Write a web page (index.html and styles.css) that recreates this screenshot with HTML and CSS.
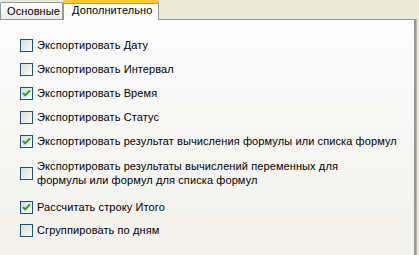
FILE: index.html
```html
<!DOCTYPE html>
<html>
<head>
<meta charset="utf-8">
<link rel="stylesheet" href="styles.css">
</head>
<body>
<div class="tabs">
  <div class="tab">Основные</div>
  <div class="tab active">Дополнительно</div>
</div>
<div class="panel">
  <div class="row"><span class="cb"></span><span class="lbl">Экспортировать Дату</span></div>
  <div class="row"><span class="cb"></span><span class="lbl">Экспортировать Интервал</span></div>
  <div class="row"><span class="cb checked"><svg viewBox="0 0 11 11" width="11" height="11"><path d="M2 5 L4.2 7.4 L9 2.4" fill="none" stroke="#21a121" stroke-width="2"/></svg></span><span class="lbl">Экспортировать Время</span></div>
  <div class="row"><span class="cb"></span><span class="lbl">Экспортировать Статус</span></div>
  <div class="row"><span class="cb checked"><svg viewBox="0 0 11 11" width="11" height="11"><path d="M2 5 L4.2 7.4 L9 2.4" fill="none" stroke="#21a121" stroke-width="2"/></svg></span><span class="lbl">Экспортировать результат вычисления формулы или списка формул</span></div>
  <div class="row tall"><span class="cb"></span><span class="lbl">Экспортировать результаты вычислений переменных для<br>формулы или формул для списка формул</span></div>
  <div class="row mid"><span class="cb checked"><svg viewBox="0 0 11 11" width="11" height="11"><path d="M2 5 L4.2 7.4 L9 2.4" fill="none" stroke="#21a121" stroke-width="2"/></svg></span><span class="lbl">Рассчитать строку Итого</span></div>
  <div class="row last"><span class="cb"></span><span class="lbl">Сгруппировать по дням</span></div>
</div>
</body>
</html>
```
FILE: styles.css
```css
html, body {
  margin: 0;
  padding: 0;
  background: #ece9d8;
  font-family: "Liberation Sans", Tahoma, sans-serif;
  font-size: 11px;
  color: #000;
  overflow: hidden;
}
.tabs {
  display: flex;
  align-items: flex-end;
  height: 19px;
  position: relative;
  z-index: 1;
}
.tab {
  box-sizing: border-box;
  height: 17px;
  width: 63px;
  border: 1px solid #919b9c;
  border-bottom: none;
  border-radius: 2px 2px 0 0;
  background: linear-gradient(#fefefe, #ecebe6);
  padding: 2px 0 0 6px;
  line-height: 13px;
  letter-spacing: 0.1px;
}
.tab.active {
  height: 20px;
  width: 96px;
  margin-bottom: -1px;
  background: #fcfcfe;
  border-top: 3px solid #ffc83c;
  box-shadow: inset 0 1px 0 #e68b2c;
  padding: 1px 0 0 8px;
}
.panel {
  box-sizing: border-box;
  width: 417px;
  height: 240px;
  margin-left: -1px;
  border: 1px solid #919b9c;
  border-right: 2px solid #919b9c;
  box-shadow: 1px 0 0 #b5b8b4;
  background: linear-gradient(#fcfcfe, #f4f3ee 200px);
  padding: 13px 0 0 20px;
}
.row {
  display: flex;
  align-items: center;
  height: 24px;
}
.row.tall { height: 40px; }
.row.mid { height: 28px; }
.row.last { height: 18px; }
.cb {
  box-sizing: border-box;
  flex: none;
  width: 13px;
  height: 13px;
  border: 1px solid #1c5180;
  background: linear-gradient(135deg, #dcdcd7, #fbfbf9);
  margin-right: 4px;
  display: flex;
}
.lbl {
  line-height: 14px;
  letter-spacing: 0.1px;
}
```
